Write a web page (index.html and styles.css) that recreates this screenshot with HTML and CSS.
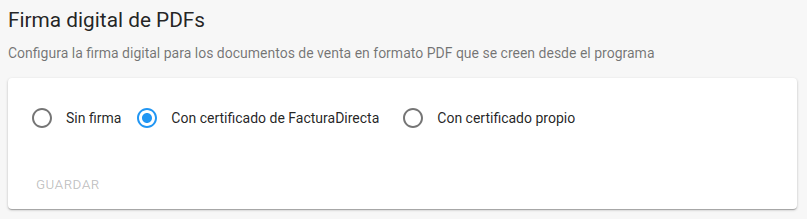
FILE: index.html
```html
<!DOCTYPE html>
<html lang="es">
<head>
    <meta charset="UTF-8" />
    <meta name="viewport" content="width=device-width, initial-scale=1.0"/>
    <title>Firma digital de PDFs</title>
    <link rel="stylesheet" href="styles.css">
</head>
<body>

<div class="section">
    <h2 class="title">Firma digital de PDFs</h2>
    <p class="subtitle">Configura la firma digital para los documentos de venta en formato PDF que se creen desde el programa</p>

    <div class="card">
        <div class="radio-group">
            <label class="radio-label">
                <span class="radio">
                    <svg viewBox="0 0 24 24"><path d="M12 2C6.48 2 2 6.48 2 12s4.48 10 10 10 10-4.48 10-10S17.52 2 12 2zm0 18c-4.42 0-8-3.58-8-8s3.58-8 8-8 8 3.58 8 8-3.58 8-8 8z"/></svg>
                </span>
                <span class="radio-text">Sin firma</span>
            </label>
            <label class="radio-label wide">
                <span class="radio checked">
                    <svg viewBox="0 0 24 24"><path d="M12 7c-2.76 0-5 2.24-5 5s2.24 5 5 5 5-2.24 5-5-2.24-5-5-5zm0-5C6.48 2 2 6.48 2 12s4.48 10 10 10 10-4.48 10-10S17.52 2 12 2zm0 18c-4.42 0-8-3.58-8-8s3.58-8 8-8 8 3.58 8 8-3.58 8-8 8z"/></svg>
                </span>
                <span class="radio-text">Con certificado de FacturaDirecta</span>
            </label>
            <label class="radio-label">
                <span class="radio">
                    <svg viewBox="0 0 24 24"><path d="M12 2C6.48 2 2 6.48 2 12s4.48 10 10 10 10-4.48 10-10S17.52 2 12 2zm0 18c-4.42 0-8-3.58-8-8s3.58-8 8-8 8 3.58 8 8-3.58 8-8 8z"/></svg>
                </span>
                <span class="radio-text">Con certificado propio</span>
            </label>
        </div>

        <div class="actions">
            <button class="save-btn" disabled>Guardar</button>
        </div>
    </div>
</div>

</body>
</html>
```

FILE: styles.css
```css
:root {
    --bg: #f7f7f7;
    --text: rgba(0, 0, 0, 0.87);
    --dim: rgba(0, 0, 0, 0.54);
    --primary: #2196f3;
    --disabled: rgba(0, 0, 0, 0.24);
}

* {
    box-sizing: border-box;
}

html, body {
    margin: 0;
    background: var(--bg);
    font-family: Roboto, "Liberation Sans", Arial, sans-serif;
    color: var(--text);
}

body {
    padding: 8px 10px 8px 8px;
}

/* cabecera */
.title {
    margin: 0;
    font-size: 20.8px;
    line-height: 24px;
    font-weight: 400;
    color: var(--text);
}

.subtitle {
    margin: 11px 0 15px;
    font-size: 14px;
    line-height: 20px;
    color: var(--dim);
}

/* tarjeta */
.card {
    background: #fff;
    border-radius: 4px;
    padding: 19px 24px 7px;
    box-shadow: 0 1px 3px rgba(0,0,0,0.2), 0 1px 1px rgba(0,0,0,0.14), 0 2px 1px -1px rgba(0,0,0,0.12);
}

.radio-group {
    display: flex;
    align-items: center;
}

.radio-label {
    display: inline-flex;
    align-items: center;
    margin-left: -11px;
    margin-right: 16px;
    cursor: pointer;
}

.radio-label.wide {
    margin-right: 24px;
}

.radio {
    display: flex;
    padding: 9px;
    color: rgba(0, 0, 0, 0.54);
}

.radio svg {
    width: 24px;
    height: 24px;
    fill: currentColor;
}

.radio.checked {
    color: var(--primary);
}

.radio-text {
    font-size: 14px;
    line-height: 20px;
    padding-left: 3px;
}

.actions {
    margin-top: 27px;
    display: flex;
}

.save-btn {
    background: none;
    border: none;
    margin-left: -4px;
    padding: 6px 8px;
    min-height: 36px;
    font-family: inherit;
    font-size: 13.5px;
    font-weight: 400;
    letter-spacing: 0.4px;
    text-transform: uppercase;
    color: var(--disabled);
}
```
